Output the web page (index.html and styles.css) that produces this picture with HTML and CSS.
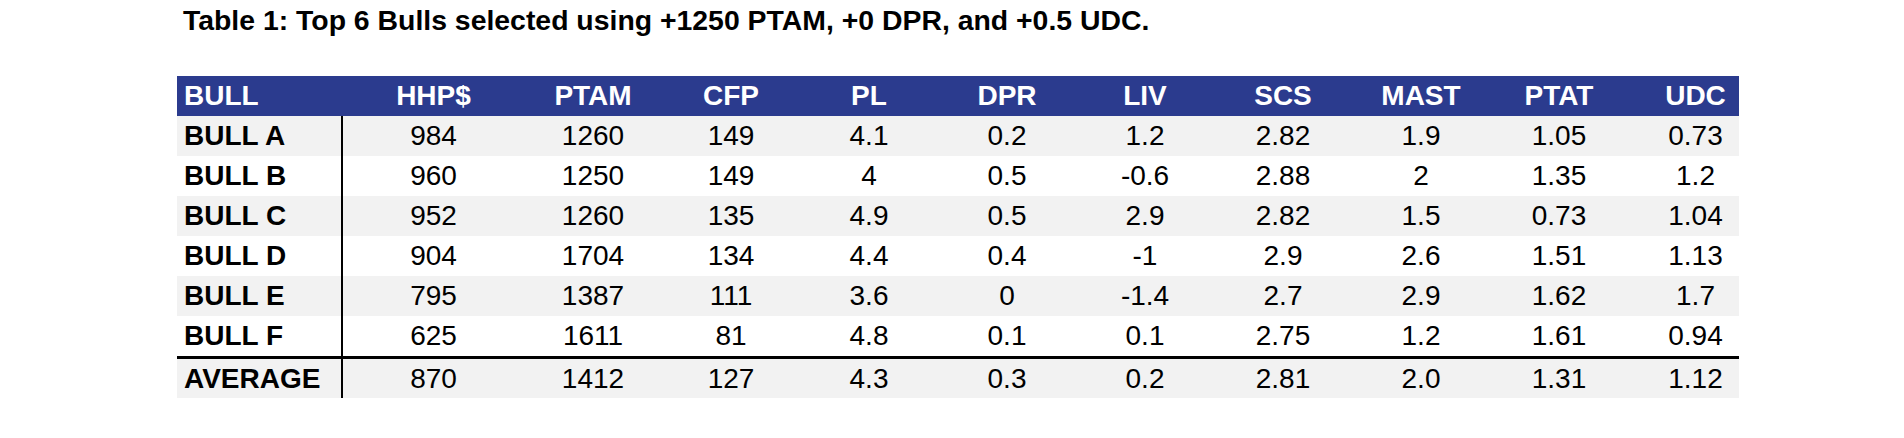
FILE: index.html
```html
<!DOCTYPE html>
<html>
<head>
<meta charset="utf-8">
<link rel="stylesheet" href="styles.css">
</head>
<body>
<div class="page">
  <h1 class="caption">Table 1: Top 6 Bulls selected using +1250 PTAM, +0 DPR, and +0.5 UDC.</h1>
  <table class="bulls">
    <colgroup>
      <col class="c-name">
      <col class="c-hhp">
      <col class="c-std">
      <col class="c-std">
      <col class="c-std">
      <col class="c-std">
      <col class="c-std">
      <col class="c-std">
      <col class="c-std">
      <col class="c-std">
      <col class="c-last">
    </colgroup>
    <thead>
      <tr>
        <th class="name">BULL</th><th>HHP$</th><th>PTAM</th><th>CFP</th><th>PL</th><th>DPR</th><th>LIV</th><th>SCS</th><th>MAST</th><th>PTAT</th><th class="last">UDC</th>
      </tr>
    </thead>
    <tbody>
      <tr class="shade"><td class="name">BULL A</td><td>984</td><td>1260</td><td>149</td><td>4.1</td><td>0.2</td><td>1.2</td><td>2.82</td><td>1.9</td><td>1.05</td><td class="last">0.73</td></tr>
      <tr><td class="name">BULL B</td><td>960</td><td>1250</td><td>149</td><td>4</td><td>0.5</td><td>-0.6</td><td>2.88</td><td>2</td><td>1.35</td><td class="last">1.2</td></tr>
      <tr class="shade"><td class="name">BULL C</td><td>952</td><td>1260</td><td>135</td><td>4.9</td><td>0.5</td><td>2.9</td><td>2.82</td><td>1.5</td><td>0.73</td><td class="last">1.04</td></tr>
      <tr><td class="name">BULL D</td><td>904</td><td>1704</td><td>134</td><td>4.4</td><td>0.4</td><td>-1</td><td>2.9</td><td>2.6</td><td>1.51</td><td class="last">1.13</td></tr>
      <tr class="shade"><td class="name">BULL E</td><td>795</td><td>1387</td><td>111</td><td>3.6</td><td>0</td><td>-1.4</td><td>2.7</td><td>2.9</td><td>1.62</td><td class="last">1.7</td></tr>
      <tr><td class="name">BULL F</td><td>625</td><td>1611</td><td>81</td><td>4.8</td><td>0.1</td><td>0.1</td><td>2.75</td><td>1.2</td><td>1.61</td><td class="last">0.94</td></tr>
      <tr class="shade avg"><td class="name">AVERAGE</td><td>870</td><td>1412</td><td>127</td><td>4.3</td><td>0.3</td><td>0.2</td><td>2.81</td><td>2.0</td><td>1.31</td><td class="last">1.12</td></tr>
    </tbody>
  </table>
</div>
</body>
</html>
```

FILE: styles.css
```css
html, body {
  margin: 0;
  padding: 0;
  background: #ffffff;
}

.page {
  padding-left: 177px;
  font-family: "Liberation Sans", Arial, sans-serif;
  color: #000000;
}

.caption {
  margin: 4px 0 0 6px;
  font-size: 28.4px;
  line-height: 32px;
  font-weight: bold;
  height: 32px;
}

.bulls {
  margin-top: 40px;
  border-collapse: separate;
  border-spacing: 0;
  table-layout: fixed;
  width: 1562px;
  font-size: 28px;
}

.c-name { width: 166px; }
.c-hhp { width: 181px; }
.c-std { width: 138px; }
.c-last { width: 111px; }

.bulls th,
.bulls td {
  padding: 0;
  height: 40px;
  line-height: 40px;
  text-align: center;
  white-space: nowrap;
}

.bulls thead th {
  background: #2b3b8e;
  color: #ffffff;
  font-weight: bold;
}

.bulls th.name,
.bulls td.name {
  text-align: left;
  padding-left: 7px;
  font-weight: bold;
}

.bulls th.last,
.bulls td.last {
  padding-left: 24px;
}

.bulls tbody td.name {
  border-right: 2px solid #000000;
}

.bulls tr.shade td {
  background: #f2f2f2;
}

.bulls tr.avg td {
  border-top: 3px solid #000000;
  height: 39px;
  line-height: 39px;
}
```
